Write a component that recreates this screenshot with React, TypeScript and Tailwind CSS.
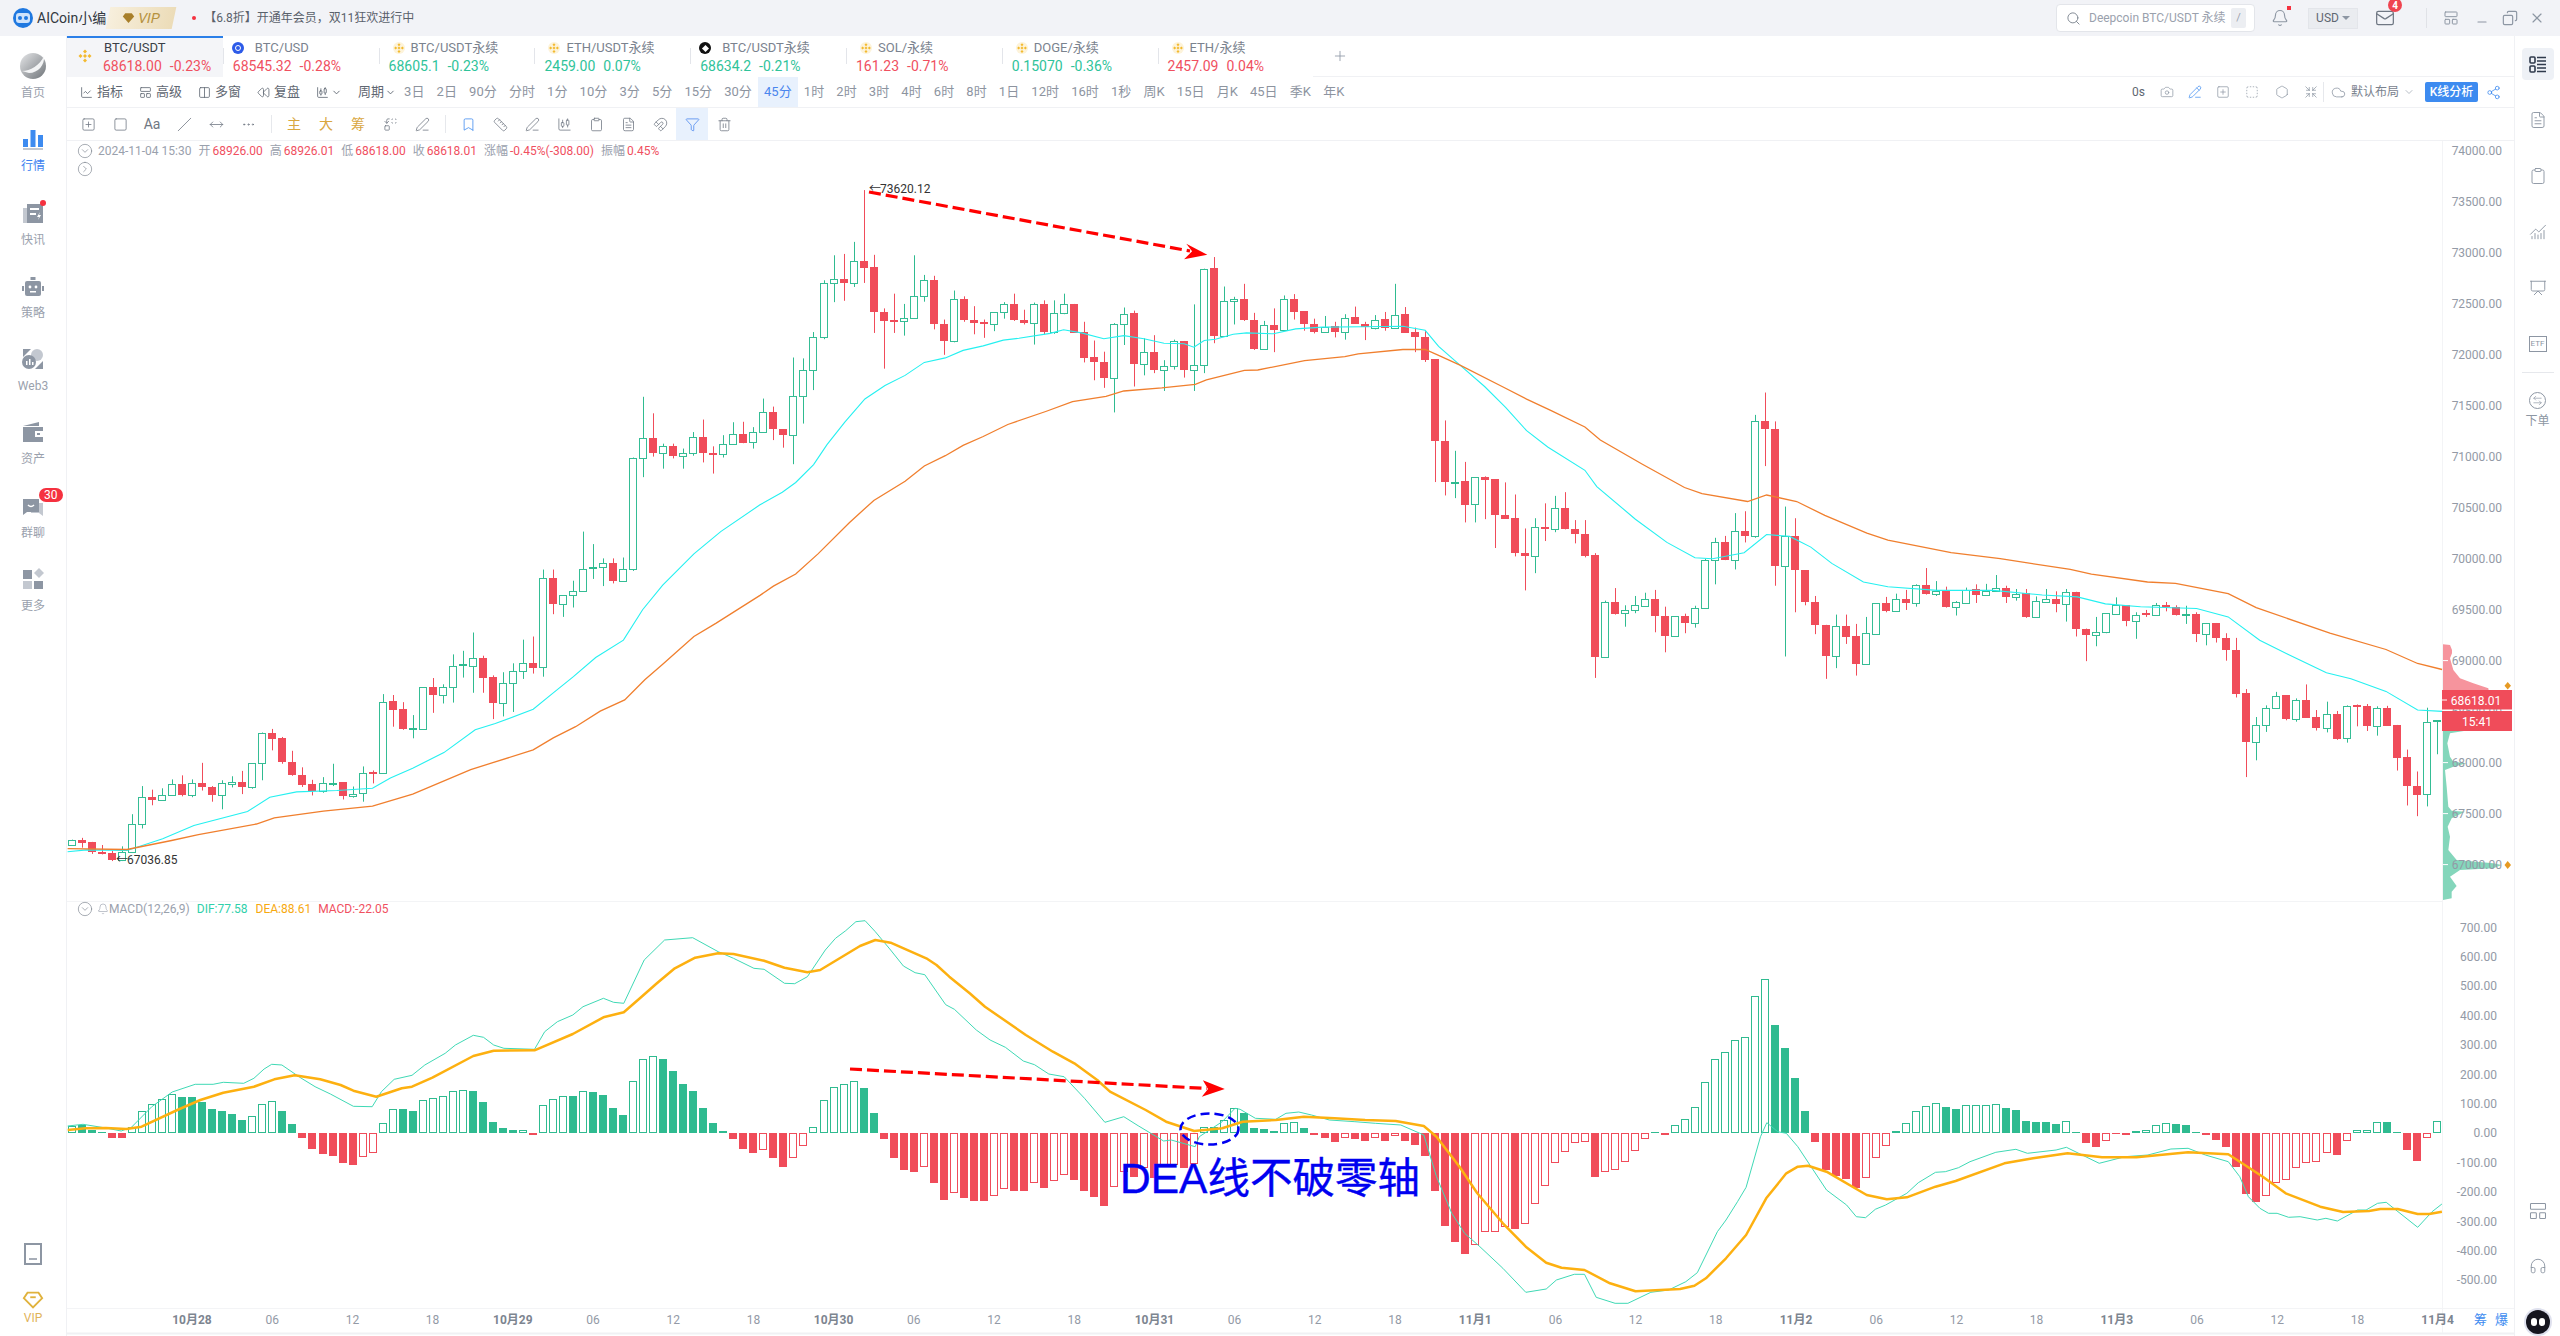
import type { ReactNode } from "react";
import {
  Search,
  Camera,
  PencilLine,
  Share2,
  ChevronDown,
  Plus,
  X,
  Minus,
  Bell,
  Mail,
  Cloud,
  Trash2,
  Funnel,
  Magnet,
  Square,
  Slash,
  MoveHorizontal,
  Ellipsis,
  Bookmark,
  Ruler,
  PenLine,
  ChartCandlestick,
  Copy,
  FileText,
  Headphones,
  ChartLine,
  LayoutPanelTop,
  Hexagon,
  Columns2,
  Rewind,
  SquarePlus,
  SquareDashed,
  Shrink,
  ArrowLeftRight,
  ChartNoAxesCombined,
  Presentation,
  CircleChevronDown,
  Clipboard,
  Replace,
} from "lucide-react";

// candles read off the chart: top,bottom,high,low,kind (r red, h hollow green, d small solid green)
const candlesA = `1500,1513,1500,1513,h 1500,1507,1496,1518,r 1505,1527,1505,1532,r 1527,1531,1512,1533,r 1530,1545,1525,1548,r 1528,1545,1515,1548,h 1465,1528,1443,1530,h 1405,1464,1380,1475,h 1404,1412,1388,1423,r 1399,1412,1385,1412,h 1376,1399,1365,1399,h 1376,1401,1356,1403,r 1374,1401,1365,1405,h 1373,1383,1328,1390,r 1383,1399,1380,1415,r 1374,1399,1367,1432,h 1371,1376,1358,1383,h 1370,1383,1346,1398,r 1329,1383,1329,1386,h 1260,1329,1260,1367,h 1260,1274,1252,1300,r 1272,1325,1270,1330,r 1325,1356,1301,1357,r 1356,1378,1338,1382,r 1375,1392,1366,1401,r 1374,1390,1360,1395,h 1373,1375,1330,1380,d 1372,1403,1372,1410,r 1397,1403,1381,1406,h 1350,1396,1336,1415,h 1348,1352,1345,1374,r 1191,1351,1174,1352,h 1190,1209,1176,1247,r 1207,1253,1192,1254,r 1251,1253,1221,1273,d 1159,1253,1159,1253,h 1159,1177,1138,1216,r 1157,1176,1152,1195,h 1110,1157,1085,1193,h 1107,1110,1077,1137,d 1092,1110,1036,1171,h 1092,1137,1088,1171,r 1136,1193,1132,1230,r 1148,1193,1125,1224,h 1123,1148,1105,1214,h 1105,1123,1052,1140,h 1105,1115,1045,1128,r 915,1114,895,1135,h 915,973,895,995,r 953,973,953,1001,h 944,953,920,980,h 893,944,810,944,h 889,892,838,916,d 881,890,870,932,h 881,920,870,926,r 893,920,868,920,h 644,893,644,898,h 601,644,508,688,h 601,633,545,642,r 619,633,613,669,h 619,640,613,646,r 635,640,624,669,h 597,635,587,640,h 597,635,559,655,r 634,637,619,680,r 613,637,594,644,h 592,613,565,615,h 592,611,564,612,r 586,610,576,624,h`;
const candlesB = `541,586,512,589,h 541,581,530,605,r 581,593,581,622,r 507,593,420,659,h 447,507,422,568,h 373,447,363,493,h 254,373,247,379,h 245,254,191,296,h 245,252,188,293,r 203,252,161,262,h 203,219,45,253,r 217,317,190,365,r 317,339,310,445,r 337,339,277,365,r 331,339,300,371,h 283,331,191,333,h 247,283,235,295,h 247,344,237,357,r 344,384,335,414,r 290,384,270,386,h 290,337,283,340,r 336,343,305,368,r 340,344,335,376,r 319,344,319,361,h 301,319,296,333,h 301,337,277,338,r 336,343,313,346,r 301,342,297,391,h 300,363,292,368,r 321,363,292,367,h 301,321,277,323,h 300,364,300,365,r 363,420,340,431,r 419,429,382,471,r 429,467,407,488,r 346,467,343,543,h 322,346,308,392,h 320,435,315,485,r 408,434,377,460,h 408,447,370,455,r 440,447,426,495,h 384,440,380,447,h 383,447,383,465,r 436,447,301,495,h 221,436,221,455,h 220,372,195,388,r 294,372,261,372,h 288,294,284,346,h 288,337,255,338,r 336,402,320,403,r 348,402,338,403,h 348,358,310,408,r 290,358,281,358,h 290,318,278,335,r 316,345,316,360,r 344,363,333,366,r 351,362,327,363,h 350,362,340,375,r 331,362,323,380,h 330,344,306,345,r 344,352,340,381,r 335,354,325,357,h 334,354,318,360,r 324,354,255,356,h 323,364,307,365,r 363,375,353,408,r 375,425,361,430,r 424,608,424,699,r 607,700,561,729,r 698,700,629,735,d`;
const candlesC = `669,719,627,757,r 660,718,660,757,h 660,665,658,750,r 664,740,664,812,r 740,749,671,749,r 747,822,697,830,r 822,830,770,903,r 766,830,748,866,h 766,772,716,797,r 727,772,700,778,h 726,772,692,772,r 772,781,752,802,r 781,829,752,832,r 827,1047,823,1091,r 929,1046,925,1046,h 929,953,898,955,r 946,952,935,981,h 935,946,915,952,h 922,936,908,938,h 921,959,902,993,r 958,1000,938,1036,r 959,1000,959,1003,h 958,974,953,995,r 940,974,936,983,h 838,940,835,942,h 798,838,790,890,h 798,837,786,838,r 776,837,737,858,h 775,787,733,800,r 540,787,526,790,h 540,557,478,636,r 556,850,540,893,r 787,850,723,1045,h 787,860,748,950,r 860,927,860,935,r 927,978,915,997,r 977,1043,977,1093,r 980,1043,955,1070,h 979,1003,955,1018,r 1001,1062,975,1086,r 995,1062,960,1062,h 931,996,931,998,h 931,947,917,950,r 922,947,910,949,h 921,930,902,945,r 892,930,890,938,h 892,910,855,912,r 905,910,883,915,h 905,938,895,940,r 929,938,926,957,h 902,930,897,932,h 901,912,890,930,r 904,912,889,915,h 897,905,870,905,h 897,918,893,930,r 910,918,900,925,h 909,961,900,962,r 926,961,916,962,h 921,927,900,930,h 921,932,905,950,r 907,932,900,970,h 906,987,906,1002,r 986,998,985,1055,r 993,998,960,1023,h 952,993,952,995,h 935,953,918,954,h 935,968,935,980,r 955,968,950,1007,h 952,956,945,960,r 935,955,930,957,h 934,938,928,948,r 938,955,935,957,r 953,956,936,975,d 953,997,950,1014,r 974,996,973,1021,h 973,1006,973,1015,r 1005,1031,995,1054,r 1030,1125,1005,1133,r 1123,1228,1115,1304,r 1193,1228,1175,1268,h 1155,1193,1150,1207,h 1129,1155,1121,1157,h 1128,1180,1128,1182,r 1139,1180,1135,1185,h 1138,1177,1105,1177,r 1176,1198,1160,1204,r 1169,1198,1142,1208,h 1168,1222,1162,1224,r 1151,1220,1150,1230,h 1150,1153,1148,1195,r 1151,1195,1147,1205,r 1156,1195,1152,1215,h 1155,1194,1151,1194,r 1192,1262,1192,1290,r 1261,1324,1245,1365,r 1323,1342,1292,1388,r 1185,1341,1155,1367,h 1182,1185,1182,1255,d`;

// macd bars: zoom y + s solid green, h hollow green, r solid red, e hollow red
const macdA = `708h 704s 720s 726s 743r 743r 712h 664h 643h 628h 613h 621s 621s 636s 657s 663s 672s 690s 679h 643h 634h 663s 702s 743r 776r 791r 797r 818r 824r 802e 790e 700h 658h 658s 663s 631h 625h 619h 604h 601h 603s 636s 696s 714s 720s 721h 735r 646h 628h 619h 618s 604h 606s 615s 654s 675s 574h 508h 499h 507s 543s 582s 603s 654s 699s 723s 747r 776r 788r 781e 803r 830r 805e 767e 712h 631h 592h 583h 574h 594s 669s 747r 803r 840r 845r 832e 878r 929r 910e 923r 932r 932r 919e 898e 903r 902r 880e 893r 874e 854e 869r 902r 920r 947r 892e 845e 860r 835e 865r 825e 825e 833r 823e 710h 710s 690h 655h 669s 714s 717s 724s 700h 697h 715s 734r 743r 755r 745e 747r 752r 745e 752r 738e 752r 764r 797r 902r 1007r 1055r 1091r 1064e 1027e 1025e 1010e 1016r 1003e 943e 889e 820e 787e 760e 757e 860r 847e 841e 817e 784e 746e 725s 735r 706h 688h 652h 577h 508h 487h 451h 442h 319h 268h 405s 474s 564s 663s 755r 840r 858r 866r 893r 865e 805e 767e 723s 700h 664h 649h 640h 651s 657s 646h 646h 646h 643h 654s 660s 693s 696s 696s 702s 694h 726s 759r 770r 754e 732r 735r 723s 720h 706h 700h 702s 705s 726s 735r 750r 770r 830r 911r 935r 917e 880e 871e 835e 820e 817e 790e 794r 752e 720h 720h 697h 696s 726s 779r 812r 743e 694h`;

type Pt = [number, number];

const line = (groups: [Pt[], number, number, number, number][]) =>
  groups
    .flatMap(([pts, x0, sx, y0, sy]) => pts.map(([x, y]) => `${(x0 + x / sx).toFixed(1)},${(y0 + y / sy).toFixed(1)}`))
    .join(" ");

const maFast = line([
  [[[17,1527],[60,1523],[150,1524],[230,1498],[300,1468],[420,1437],[470,1405],[530,1393],[620,1390],[700,1385],[740,1362],[790,1340],[860,1305],[930,1254],[975,1240],[1060,1208],[1100,1175],[1150,1135],[1200,1092],[1262,1053],[1305,985],[1350,930],[1420,860],[1480,810],[1568,750]], 60, 2.24, 170, 2.24],
  [[[50,722],[80,700],[120,660],[150,615],[190,565],[235,513],[280,483],[325,460],[368,431],[415,421],[455,404],[500,394],[545,381],[580,377],[650,366],[680,358],[720,365],[770,378],[815,371],[860,378],[905,388],[950,389],[972,397],[995,382],[1020,379],[1060,368],[1090,365],[1150,367],[1200,356],[1260,352],[1350,351],[1440,350],[1490,359],[1520,395],[1568,437]], 760, 2.24, 170, 2.24],
  [[[35,465],[65,510],[95,560],[125,595],[178,645],[195,680],[250,750],[295,800],[335,833],[360,835],[405,822],[437,783],[470,787],[500,810],[530,845],[575,885],[610,895],[680,903],[760,903],[830,913],[880,917],[920,932],[970,938],[1050,942],[1095,960],[1140,1010],[1180,1040],[1235,1080],[1270,1093],[1320,1120],[1365,1160],[1400,1163]], 1460, 1.4255, 170, 2.148],
]);

const maSlow = line([
  [[[17,1520],[150,1522],[250,1502],[310,1489],[440,1465],[480,1451],[590,1436],[700,1425],[790,1398],[920,1343],[1060,1299],[1105,1272],[1155,1247],[1210,1212],[1265,1187],[1310,1142],[1350,1107],[1420,1045],[1470,1015],[1568,953]], 60, 2.24, 170, 2.24],
  [[[30,932],[80,905],[130,860],[200,790],[255,740],[325,697],[368,663],[415,640],[455,617],[500,597],[555,570],[640,541],[700,519],[775,507],[815,495],[900,488],[975,480],[1000,470],[1085,449],[1115,448],[1220,427],[1310,418],[1340,412],[1440,402],[1490,402],[1520,415],[1568,437]], 760, 2.24, 170, 2.24],
  [[[60,465],[95,492],[130,517],[178,552],[200,580],[260,632],[320,682],[345,695],[410,712],[437,698],[480,712],[520,742],[580,780],[610,795],[700,822],[770,835],[870,858],[900,868],[980,885],[1020,888],[1095,910],[1135,940],[1240,995],[1320,1030],[1365,1060],[1400,1073]], 1460, 1.4255, 170, 2.148],
]);

const dif = line([
  [[[15,708],[45,703],[90,714],[120,723],[140,712],[180,650],[220,606],[265,583],[300,583],[320,577],[360,580],[380,565],[400,537],[415,523],[435,525],[470,562],[500,590],[530,612],[575,649],[612,650],[630,605],[655,568],[690,556],[715,525],[755,490],[775,465],[810,436],[830,442],[850,465],[870,475],[930,478],[950,425],[975,395],[1005,375],[1025,350],[1065,325],[1085,337],[1105,340],[1145,210],[1185,150],[1240,143],[1290,185],[1320,205],[1360,235],[1380,238],[1420,280],[1440,281],[1465,260],[1500,180],[1520,145],[1540,122],[1560,95]], 60, 1.96, 890, 3],
  [[[10,92],[30,125],[60,180],[85,228],[108,248],[127,254],[168,344],[185,358],[228,420],[255,450],[285,472],[320,513],[342,524],[370,552],[400,560],[440,625],[480,697],[517,680],[545,707],[570,730],[595,753],[610,750],[657,770],[665,740],[685,720],[710,695],[735,655],[745,658],[775,685],[815,688],[835,670],[860,666],[885,675],[920,690],[970,695],[1010,700],[1060,705],[1105,735],[1130,860],[1160,970],[1185,1030],[1215,1070],[1260,1135],[1305,1207],[1345,1197],[1365,1170],[1400,1153],[1420,1153],[1443,1222],[1480,1240],[1505,1240],[1550,1207]], 860, 1.96, 890, 3],
  [[[15,1200],[45,1175],[65,1148],[100,1025],[115,990],[135,935],[150,892],[175,740],[186,698],[205,725],[220,730],[240,770],[290,900],[325,945],[342,980],[358,983],[375,958],[393,945],[430,910],[450,878],[480,847],[497,845],[520,833],[540,815],[585,787],[620,778],[640,790],[690,780],[708,772],[765,820],[810,800],[850,795],[890,777],[920,775],[950,795],[990,815],[1010,860],[1025,920],[1045,955],[1060,970],[1075,970],[1095,982],[1115,980],[1145,990],[1160,985],[1180,993],[1215,960],[1230,960],[1250,940],[1265,937],[1320,1012],[1345,965],[1362,942]], 1660, 1.742, 890, 3],
]);

const dea = line([
  [[[15,720],[50,715],[90,714],[130,717],[160,710],[230,660],[275,630],[320,608],[380,590],[420,568],[460,556],[510,568],[550,585],[575,602],[620,620],[670,595],[690,590],[730,563],[810,498],[850,482],[930,481],[1005,432],[1065,382],[1105,367],[1140,320],[1170,280],[1205,235],[1245,203],[1290,190],[1320,192],[1380,212],[1420,233],[1465,247],[1490,240],[1568,168]], 60, 1.96, 890, 3],
  [[[30,150],[60,158],[130,205],[150,225],[175,260],[215,310],[245,350],[325,435],[378,485],[420,520],[465,570],[490,605],[560,660],[600,695],[655,723],[710,715],[750,695],[815,690],[870,680],[930,685],[990,690],[1050,693],[1105,708],[1130,740],[1175,830],[1210,910],[1260,1000],[1305,1070],[1345,1118],[1375,1133],[1420,1140],[1470,1180],[1520,1204]], 860, 1.96, 890, 3],
  [[[35,1197],[60,1187],[80,1165],[115,1105],[150,1035],[185,925],[220,850],[240,830],[258,827],[290,845],[360,915],[395,928],[430,922],[480,890],[515,873],[600,820],[650,805],[710,790],[770,802],[830,802],[920,787],[990,793],[1050,860],[1090,910],[1150,950],[1190,966],[1235,963],[1255,957],[1285,957],[1320,972],[1340,972],[1362,965]], 1660, 1.742, 890, 3],
]);

const GREEN = "#2fbb90";
const RED = "#f04c5a";
const barX = (i: number) => Math.round(72 + 10.02 * i);

const parseCandles = (src: string, sy: number) =>
  src.split(" ").map((c) => {
    const p = c.split(",");
    const [top, bottom, high, low] = p.slice(0, 4).map((v) => 170 + Number(v) / sy);
    return { top, bottom, high, low, kind: p[4] };
  });

const candles = [...parseCandles(candlesA, 2.24), ...parseCandles(candlesB, 2.24), ...parseCandles(candlesC, 2.148)];

const bars = macdA.split(" ").map((b) => ({
  y: 890 + Number(b.slice(0, -1)) / 3,
  kind: b.slice(-1),
}));

const ZERO = 1133;

const profile = (pts: Pt[]) => pts.map(([x, y]) => `${2400 + x / 3},${620 + y / 3}`).join(" ");

const priceTicks = Array.from({ length: 15 }, (_, i) => ({ label: (74000 - i * 500).toFixed(2), y: 150.6 + i * 51 }));
const macdTicks = Array.from({ length: 13 }, (_, i) => ({ label: (700 - i * 100).toFixed(2), y: 927 + i * 29.4 }));
const dayNames = ["10月28", "10月29", "10月30", "10月31", "11月1", "11月2", "11月3", "11月4"];
const timeTicks = Array.from({ length: 29 }, (_, i) => ({
  x: 192 + i * 80.2,
  label: i % 4 === 0 ? dayNames[i / 4] : ["", "06", "12", "18"][i % 4],
  bold: i % 4 === 0,
}));

function Chart() {
  return (
    <svg viewBox="67 141 2447 1195" className="block h-full w-full">
      <line x1="67" y1="901.5" x2="2442" y2="901.5" stroke="#f3f4f6" />
      <line x1="67" y1="1308.5" x2="2514" y2="1308.5" stroke="#f3f4f6" />
      <line x1="67" y1="1333.5" x2="2514" y2="1333.5" stroke="#f0f1f4" strokeWidth="2" />
      <line x1="2442.5" y1="141" x2="2442.5" y2="1333" stroke="#f3f4f6" />

      {/* volume profile */}
      <polygon
        fill="#f6949d"
        points={profile([[129,73],[150,75],[156,90],[156,100],[150,115],[160,150],[180,175],[220,190],[265,205],[270,240],[129,240]])}
      />
      <polygon
        fill="#84d6bb"
        points={profile([[129,300],[210,330],[150,340],[142,370],[150,410],[160,425],[200,430],[160,440],[135,450],[140,500],[145,560],[155,572],[195,575],[155,595],[143,620],[150,650],[145,690],[170,720],[280,730],[305,735],[280,745],[180,750],[150,770],[170,798],[155,815],[155,835],[129,840]])}
      />

      {/* candles */}
      {candles.map((c, i) => {
        const x = barX(i);
        const color = c.kind === "r" ? RED : GREEN;
        const top = Math.round(c.top);
        const bottom = Math.round(c.bottom);
        return (
          <g key={i}>
            <line x1={x + 0.5} y1={c.high} x2={x + 0.5} y2={c.low} stroke={color} strokeWidth="1" />
            {c.kind === "h" ? (
              <rect x={x - 3.5} y={top + 0.5} width="7" height={Math.max(bottom - top, 1)} fill="#fff" stroke="#35bd95" />
            ) : (
              <rect x={x - 4} y={top} width="8" height={Math.max(bottom - top, 2)} fill={color} />
            )}
          </g>
        );
      })}
      <polyline points={maFast} fill="none" stroke="#25f0f0" strokeWidth="1.1" />
      <polyline points={maSlow} fill="none" stroke="#f07f2e" strokeWidth="1.3" />

      <text x="869" y="193" fontSize="12" fill="#333">←</text>
      <text x="880" y="193" fontSize="12" fill="#333">73620.12</text>
      <text x="116" y="864" fontSize="12" fill="#333">←</text>
      <text x="127" y="864" fontSize="12" fill="#333">67036.85</text>

      {/* macd */}
      {bars.map((b, i) => {
        const x = barX(i);
        const v = Math.round(b.y);
        const y = Math.min(v, ZERO);
        const h = Math.abs(ZERO - v);
        if (b.kind === "s" || b.kind === "r")
          return <rect key={i} x={x - 4} y={y} width="8" height={h} fill={b.kind === "s" ? GREEN : RED} />;
        return (
          <rect key={i} x={x - 3.5} y={y + 0.5} width="7" height={h - 1} fill="#fff" stroke={b.kind === "h" ? GREEN : RED} />
        );
      })}
      <polyline points={dif} fill="none" stroke="#3fd9b5" strokeWidth="1" />
      <polyline points={dea} fill="none" stroke="#fdb010" strokeWidth="2.5" strokeLinejoin="round" />

      {/* annotations drawn on the chart */}
      <line x1="869" y1="192" x2="1190" y2="251" stroke="#ff0000" strokeWidth="3.2" strokeDasharray="12 5" />
      <polygon points="1207.3,254.8 1186.3,243.7 1192.1,251.3 1184.1,259.3" fill="#ff0000" />
      <line x1="850" y1="1069" x2="1207" y2="1088.5" stroke="#ff0000" strokeWidth="3.2" strokeDasharray="12 5" />
      <polygon points="1224.8,1089 1202.9,1080.3 1208,1089 1201.8,1096.7" fill="#ff0000" />
      <ellipse cx="1209.5" cy="1129" rx="29" ry="15.5" fill="none" stroke="#0000f0" strokeWidth="2.5" strokeDasharray="9 5" />

      {/* axes */}
      {priceTicks.map((t) => (
        <g key={t.label}>
          <line x1="2443" y1={t.y} x2="2448" y2={t.y} stroke="#fff" />
          <text x="2502" y={t.y + 4.5} fontSize="12" textAnchor="end" fill="#939aa6">{t.label}</text>
        </g>
      ))}
      {macdTicks.map((t) => (
        <text key={t.label} x="2497" y={t.y + 4.5} fontSize="12" textAnchor="end" fill="#939aa6">{t.label}</text>
      ))}
      {timeTicks.map((t) => (
        <text
          key={t.x}
          x={t.x}
          y="1323.5"
          fontSize="12"
          textAnchor="middle"
          fontWeight={t.bold ? 700 : 400}
          fill={t.bold ? "#7d8590" : "#939aa6"}
        >
          {t.label}
        </text>
      ))}
      <text x="2474" y="1324" fontSize="13" fill="#3d8bf0">筹</text>
      <text x="2495" y="1324" fontSize="13" fill="#3d8bf0">爆</text>

      {/* live price */}
      <rect x="2442" y="690" width="70" height="19.5" fill={RED} />
      <rect x="2442" y="711" width="70" height="20" fill={RED} />
      <line x1="2442" y1="700" x2="2447" y2="700" stroke="#fff" />
      <text x="2476" y="704.5" fontSize="12" textAnchor="middle" fill="#fff">68618.01</text>
      <text x="2477" y="725.5" fontSize="12" textAnchor="middle" fill="#fff">15:41</text>
      <polygon points="2507.7,682 2511,685.7 2507.7,689.5 2504.5,685.7" fill="#e69a23" />
      <polygon points="2507.7,861 2511,865 2507.7,869 2504.5,865" fill="#e69a23" />
    </svg>
  );
}

function NavIcon({ children }: { children: ReactNode }) {
  return (
    <svg viewBox="0 0 24 24" className="h-[24px] w-[24px]">
      {children}
    </svg>
  );
}

const navItems: { label: string; active?: boolean; badge?: string; dot?: boolean; icon: ReactNode }[] = [
  {
    label: "首页",
    icon: (
      <svg viewBox="0 0 30 30" className="h-[30px] w-[30px]">
        <defs>
          <linearGradient id="homeBall" x1="0" y1="0" x2="1" y2="1">
            <stop offset="0" stopColor="#e5e6e8" />
            <stop offset="1" stopColor="#6f7479" />
          </linearGradient>
        </defs>
        <circle cx="15" cy="15" r="13" fill="url(#homeBall)" />
        <path d="M4 20C12 20 22 14 26 5c1 9-6 17-15 17z" fill="#f3f4f5" />
      </svg>
    ),
  },
  {
    label: "行情",
    active: true,
    icon: (
      <NavIcon>
        <rect x="2" y="12" width="5" height="8" fill="#3d8bf0" />
        <rect x="9.5" y="3" width="5" height="17" fill="#3d8bf0" />
        <rect x="17" y="8" width="5" height="12" fill="#3d8bf0" />
        <rect x="2" y="21" width="20" height="2" fill="#c3c8d0" />
      </NavIcon>
    ),
  },
  {
    label: "快讯",
    dot: true,
    icon: (
      <NavIcon>
        <rect x="2" y="7" width="6" height="15" fill="#c3c8d0" />
        <rect x="6" y="3" width="16" height="19" fill="#8d96a3" />
        <rect x="9" y="7" width="9" height="2" fill="#fff" />
        <rect x="9" y="12" width="6" height="2" fill="#fff" />
        <path d="M19 11l-3 5h2l-1 3 3-5h-2z" fill="#fff" />
      </NavIcon>
    ),
  },
  {
    label: "策略",
    icon: (
      <NavIcon>
        <rect x="4" y="7" width="16" height="15" rx="2" fill="#8d96a3" />
        <rect x="9.5" y="3" width="5" height="3" fill="#8d96a3" />
        <rect x="1" y="12" width="2" height="5" fill="#8d96a3" />
        <rect x="21" y="12" width="2" height="5" fill="#8d96a3" />
        <circle cx="9" cy="13" r="1.4" fill="#fff" />
        <circle cx="15" cy="13" r="1.4" fill="#fff" />
        <rect x="9" y="17" width="6" height="1.5" fill="#fff" />
      </NavIcon>
    ),
  },
  {
    label: "Web3",
    icon: (
      <NavIcon>
        <path d="M2 2h8L2 10z" fill="#8d96a3" />
        <path d="M22 22h-8l8-8z" fill="#8d96a3" />
        <circle cx="16" cy="8" r="6" fill="#c3c8d0" />
        <circle cx="8" cy="15" r="7" fill="#8d96a3" />
        <rect x="5" y="14" width="1.5" height="4" fill="#fff" />
        <rect x="8" y="12" width="1.5" height="6" fill="#fff" />
        <rect x="11" y="15" width="1.5" height="3" fill="#fff" />
      </NavIcon>
    ),
  },
  {
    label: "资产",
    icon: (
      <NavIcon>
        <path d="M2 6l16-4v4z" fill="#8d96a3" />
        <rect x="2" y="7" width="20" height="15" fill="#8d96a3" />
        <rect x="14" y="11" width="8" height="6" fill="#fff" />
        <rect x="16" y="13" width="3" height="2" fill="#8d96a3" />
      </NavIcon>
    ),
  },
  {
    label: "群聊",
    badge: "30",
    icon: (
      <NavIcon>
        <path d="M2 5h16v13H6l-4 3z" fill="#8d96a3" />
        <path d="M18 9h4v13l-4-3h-8v-1h8z" fill="#c3c8d0" />
        <path d="M7 11c2 2 4 2 6 0" stroke="#fff" strokeWidth="1.5" fill="none" />
      </NavIcon>
    ),
  },
  {
    label: "更多",
    icon: (
      <NavIcon>
        <rect x="2" y="3" width="9" height="9" fill="#8d96a3" />
        <path d="M18 1l5 5-5 5-5-5z" fill="#c3c8d0" />
        <rect x="2" y="14" width="9" height="8" fill="#c3c8d0" />
        <rect x="13" y="14" width="9" height="8" fill="#8d96a3" />
      </NavIcon>
    ),
  },
];

function LeftNav() {
  return (
    <div className="flex w-[66px] shrink-0 flex-col items-center pt-[11px]">
      {navItems.map((item) => (
        <div key={item.label} className="relative flex h-[73.3px] w-full flex-col items-center last:mt-[5px]">
          <div className="flex h-[38px] items-center">{item.icon}</div>
          <span className={`text-[12px] leading-[16px] ${item.active ? "text-[#3d7ff0]" : "text-[#9aa1ad]"}`}>
            {item.label}
          </span>
          {item.dot && <span className="absolute left-[40px] top-[6px] h-[6px] w-[6px] rounded-full bg-[#f5313f]" />}
          {item.badge && (
            <span className="absolute left-[39px] top-[1px] rounded-full bg-[#f5313f] px-[5px] text-[12px] leading-[14px] text-white">
              {item.badge}
            </span>
          )}
        </div>
      ))}
      <div className="mt-auto flex flex-col items-center pb-[10px]">
        <svg viewBox="0 0 18 22" className="mb-[25px] h-[22px] w-[18px]">
          <rect x="1" y="1" width="16" height="20" fill="none" stroke="#8d96a3" strokeWidth="2" />
          <rect x="5" y="15" width="8" height="2" fill="#a8aeb8" />
        </svg>
        <svg viewBox="0 0 24 20" className="h-[20px] w-[22px]">
          <path d="M6 2h12l4 6-10 10L2 8z" fill="none" stroke="#e0b23c" strokeWidth="2" />
          <rect x="9" y="6" width="6" height="2" fill="#e0b23c" />
        </svg>
        <span className="text-[12px] leading-[16px] text-[#dfb35a]">VIP</span>
      </div>
    </div>
  );
}

function BnbIcon({ big }: { big?: boolean }) {
  return (
    <svg viewBox="0 0 16 16" className={big ? "h-[16px] w-[16px]" : "h-[12px] w-[12px]"}>
      {!big && <circle cx="8" cy="8" r="8" fill="#fdf3da" />}
      <g fill="#f3ba2f">
        <path d="M8 1.5L10 3.5 8 5.5 6 3.5z" />
        <path d="M3.5 6L5.5 8 3.5 10 1.5 8z" />
        <path d="M12.5 6L14.5 8 12.5 10 10.5 8z" />
        <path d="M8 6L10 8 8 10 6 8z" />
        <path d="M8 10.5L10 12.5 8 14.5 6 12.5z" />
      </g>
    </svg>
  );
}

const tabs = [
  { name: "BTC/USDT", price: "68618.00", change: "-0.23%", up: false, coin: "big" },
  { name: "BTC/USD", price: "68545.32", change: "-0.28%", up: false, coin: "blue" },
  { name: "BTC/USDT永续", price: "68605.1", change: "-0.23%", up: true, coin: "bnb" },
  { name: "ETH/USDT永续", price: "2459.00", change: "0.07%", up: true, coin: "bnb" },
  { name: "BTC/USDT永续", price: "68634.2", change: "-0.21%", up: true, coin: "black" },
  { name: "SOL/永续", price: "161.23", change: "-0.71%", up: false, coin: "bnb" },
  { name: "DOGE/永续", price: "0.15070", change: "-0.36%", up: true, coin: "bnb" },
  { name: "ETH/永续", price: "2457.09", change: "0.04%", up: false, coin: "bnb" },
];

function Tabs() {
  return (
    <div className="flex h-[41px] shrink-0">
      {tabs.map((t, i) => (
        <div
          key={i}
          className={`relative h-full w-[155.8px] shrink-0 ${i === 0 ? "border-t-2 border-[#2b7fe8] bg-[#f4f5f8]" : "border-b-2 border-transparent"}`}
        >
          {i > 0 && <span className="absolute left-0 top-[12px] h-[16px] w-px bg-[#e3e5ea]" />}
          {t.coin === "big" && (
            <span className="absolute left-[10px] top-[10px]">
              <BnbIcon big />
            </span>
          )}
          {t.coin === "bnb" && (
            <span className="absolute left-[14px] top-[6px]">
              <BnbIcon />
            </span>
          )}
          {t.coin === "blue" && (
            <span className="absolute left-[9px] top-[6px] flex h-[12px] w-[12px] items-center justify-center rounded-full bg-[#2d5be8]">
              <span className="h-[6px] w-[6px] rounded-full border-[1.5px] border-white" />
            </span>
          )}
          {t.coin === "black" && (
            <span className="absolute left-[9px] top-[6px] flex h-[12px] w-[12px] items-center justify-center rounded-full bg-[#111]">
              <span className="h-[5px] w-[5px] rotate-45 bg-white" />
            </span>
          )}
          <div
            className={`absolute whitespace-nowrap text-[13px] leading-[18px] ${i === 0 ? "left-[37px] top-[1px] text-[#3a3f47]" : "left-[32px] top-[3px] text-[#7a828e]"}`}
          >
            {t.name}
          </div>
          <div
            className={`absolute flex gap-[8px] whitespace-nowrap text-[14px] leading-[18px] ${i === 0 ? "left-[36px] top-[19px]" : "left-[10px] top-[21px]"} ${t.up ? "text-[#2fc39a]" : "text-[#f0505f]"}`}
          >
            <span>{t.price}</span>
            <span>{t.change}</span>
          </div>
        </div>
      ))}
      <div className="flex flex-1 items-center border-b border-[#f0f1f4] pl-[19px]">
        <Plus className="h-[16px] w-[16px] text-[#8d96a3]" strokeWidth={1.25} />
      </div>
    </div>
  );
}

const periods = ["3日", "2日", "90分", "分时", "1分", "10分", "3分", "5分", "15分", "30分", "45分", "1时", "2时", "3时", "4时", "6时", "8时", "1日", "12时", "16时", "1秒", "周K", "15日", "月K", "45日", "季K", "年K"];

function ToolLabel({ icon, label }: { icon: ReactNode; label: string }) {
  return (
    <div className="flex items-center gap-[4px] text-[13px] text-[#5f6772]">
      {icon}
      <span>{label}</span>
    </div>
  );
}

function PeriodBar() {
  const ic = "h-[13px] w-[13px] text-[#5f6772]";
  return (
    <div className="flex h-[31px] shrink-0 items-center border-b border-[#f0f1f4] pl-[13px] pr-[13px]">
      <div className="flex items-center gap-[16px]">
        <ToolLabel icon={<ChartLine className={ic} strokeWidth={1.5} />} label="指标" />
        <ToolLabel icon={<LayoutPanelTop className={ic} strokeWidth={1.5} />} label="高级" />
        <ToolLabel icon={<Columns2 className={ic} strokeWidth={1.5} />} label="多窗" />
        <ToolLabel icon={<Rewind className={ic} strokeWidth={1.5} />} label="复盘" />
        <div className="flex items-center gap-[2px]">
          <ChartCandlestick className={ic} strokeWidth={1.5} />
          <ChevronDown className="h-[11px] w-[11px] text-[#5f6772]" />
        </div>
        <div className="flex items-center gap-[1px] text-[13px] text-[#5f6772]">
          周期
          <ChevronDown className="h-[11px] w-[11px]" />
        </div>
      </div>
      <div className="ml-[8px] flex items-center gap-[12.2px] text-[13px] text-[#8d949f]">
        {periods.map((p) =>
          p === "45分" ? (
            <span key={p} className="-mx-[6px] flex h-[30px] items-center bg-[#e8f1fd] px-[6px] text-[#4a86ee]">
              {p}
            </span>
          ) : (
            <span key={p}>{p}</span>
          ),
        )}
      </div>
      <div className="ml-auto flex items-center text-[#8d96a3]">
        <span className="mr-[15px] text-[12px] text-[#5f6772]">0s</span>
        <Camera className="mr-[14px] h-[14px] w-[14px]" strokeWidth={1.25} />
        <PencilLine className="mr-[14px] h-[14px] w-[14px] text-[#3d8bf0]" strokeWidth={1.25} />
        <SquarePlus className="mr-[15px] h-[14px] w-[14px]" strokeWidth={1.25} />
        <SquareDashed className="mr-[16px] h-[14px] w-[14px]" strokeWidth={1.25} />
        <Hexagon className="mr-[15px] h-[14px] w-[14px]" strokeWidth={1.25} />
        <Shrink className="mr-[5px] h-[14px] w-[14px]" strokeWidth={1.25} />
        <span className="mr-[7px] h-[20px] w-px bg-[#e6e8ec]" />
        <Cloud className="mr-[5px] h-[15px] w-[15px]" strokeWidth={1.25} />
        <span className="text-[12px] text-[#7a828e]">默认布局</span>
        <ChevronDown className="ml-[4px] mr-[10px] h-[12px] w-[12px]" strokeWidth={1.25} />
        <span className="mr-[8px] flex h-[20px] w-[53px] items-center justify-center rounded-[2px] bg-[#3d8bf0] text-[12px] font-medium text-white">
          K线分析
        </span>
        <Share2 className="h-[15px] w-[15px] text-[#3d8bf0]" strokeWidth={1.25} />
      </div>
    </div>
  );
}

function DrawBar() {
  const ic = "h-[15px] w-[15px]";
  const draw: ReactNode[] = [
    <SquarePlus className={ic} strokeWidth={1.25} />,
    <Square className={ic} strokeWidth={1.25} />,
    <span className="text-[14px] leading-none">Aa</span>,
    <Slash className={ic} strokeWidth={1.25} />,
    <MoveHorizontal className={ic} strokeWidth={1.25} />,
    <Ellipsis className={ic} strokeWidth={1.25} />,
  ];
  const gold = ["主", "大", "筹"];
  const mid: ReactNode[] = [
    <Replace className={ic} strokeWidth={1.25} />,
    <PenLine className={ic} strokeWidth={1.25} />,
  ];
  const tools: ReactNode[] = [
    <Bookmark className={`${ic} text-[#3d8bf0]`} strokeWidth={1.25} />,
    <Ruler className={ic} strokeWidth={1.25} />,
    <PenLine className={ic} strokeWidth={1.25} />,
    <ChartCandlestick className={ic} strokeWidth={1.25} />,
    <Clipboard className={ic} strokeWidth={1.25} />,
    <FileText className={ic} strokeWidth={1.25} />,
    <Magnet className={ic} strokeWidth={1.25} />,
  ];
  const cell = "flex h-full w-[32px] items-center justify-center";
  return (
    <div className="flex h-[33px] shrink-0 items-center border-b border-[#f0f1f4] pl-[5px] text-[#6f7783]">
      {draw.map((n, i) => (
        <div key={i} className={cell}>{n}</div>
      ))}
      <span className="mx-[7px] h-[18px] w-px bg-[#e6e8ec]" />
      <div className="-ml-[1px] flex h-full items-center">
        {gold.map((g) => (
          <div key={g} className={`${cell} text-[14px] text-[#d9a73f]`}>{g}</div>
        ))}
        {mid.map((n, i) => (
          <div key={i} className={cell}>{n}</div>
        ))}
      </div>
      <span className="mx-[7px] h-[18px] w-px bg-[#e6e8ec]" />
      <div className="-ml-[1px] flex h-full items-center">
        {tools.map((n, i) => (
          <div key={i} className={cell}>{n}</div>
        ))}
        <div className={`${cell} bg-[#e8f1fd]`}>
          <Funnel className={`${ic} text-[#4a86ee]`} strokeWidth={1.25} />
        </div>
        <div className={cell}>
          <Trash2 className={ic} strokeWidth={1.25} />
        </div>
      </div>
    </div>
  );
}

function TopBar() {
  return (
    <div className="flex h-[36px] shrink-0 items-center bg-[#f2f3f7] pl-[13px] pr-[15px]">
      <span className="flex h-[20px] w-[20px] items-center justify-center rounded-full bg-[#1f78e0]">
        <span className="flex h-[10px] w-[14px] items-center justify-center gap-[2px] rounded-[3px] bg-[#cfe3fb]">
          <span className="h-[4px] w-[4px] rounded-full bg-[#1f78e0]" />
          <span className="h-[4px] w-[4px] rounded-full bg-[#1f78e0]" />
        </span>
      </span>
      <span className="ml-[4px] text-[14px] text-[#33383f]">AICoin小编</span>
      <span className="ml-[2px] flex h-[22px] w-[66px] -skew-x-12 items-center justify-center gap-[3px] bg-[linear-gradient(90deg,#f7efdd,#ecdcb8)] text-[14px] text-[#b6923f]">
        <svg viewBox="0 0 16 14" className="h-[12px] w-[13px] skew-x-12">
          <path d="M4 1h8l3 4-7 8-7-8z" fill="#a87f2a" />
        </svg>
        <span>VIP</span>
      </span>
      <span className="ml-[18px] h-[4px] w-[4px] rounded-full bg-[#f5313f]" />
      <span className="ml-[8px] text-[12px] text-[#5a616b]">【6.8折】开通年会员，双11狂欢进行中</span>

      <div className="ml-auto flex items-center">
        <div className="flex h-[28px] w-[199px] items-center rounded-[4px] border border-[#e3e5ea] bg-white pl-[9px] pr-[8px]">
          <Search className="h-[15px] w-[15px] text-[#7d8590]" strokeWidth={1.5} />
          <span className="ml-[8px] whitespace-nowrap text-[12px] text-[#9aa1ad]">Deepcoin BTC/USDT 永续</span>
          <span className="ml-auto flex h-[20px] w-[15px] items-center justify-center rounded-[2px] bg-[#eceef2] text-[11px] text-[#9aa1ad]">/</span>
        </div>
        <div className="relative ml-[16px]">
          <Bell className="h-[18px] w-[18px] text-[#8d96a3]" strokeWidth={1.5} />
          <span className="absolute right-[-2px] top-[-3px] h-[4px] w-[4px] bg-[#f5313f]" />
        </div>
        <div className="ml-[19px] flex h-[21px] w-[50px] items-center justify-center gap-[3px] border border-[#e3e5ea] bg-[#eaecf0] text-[12px] text-[#5f6772]">
          USD
          <svg viewBox="0 0 8 4" className="h-[4px] w-[8px]">
            <path d="M0 0h8L4 4z" fill="#8d96a3" />
          </svg>
        </div>
        <div className="relative ml-[17px]">
          <Mail className="h-[20px] w-[20px] text-[#6f7783]" strokeWidth={1.5} />
          <span className="absolute right-[-7px] top-[-10px] flex h-[14px] w-[14px] items-center justify-center rounded-full bg-[#ef4450] text-[10px] font-bold text-white">4</span>
        </div>
        <span className="ml-[31px] h-[20px] w-px bg-[#e0e2e7]" />
        <LayoutPanelTop className="ml-[16px] h-[16px] w-[16px] text-[#8d96a3]" strokeWidth={1.5} />
        <Minus className="ml-[16px] h-[14px] w-[14px] translate-y-[4px] text-[#8d96a3]" strokeWidth={1.75} />
        <Copy className="ml-[13px] h-[16px] w-[16px] -scale-x-100 text-[#8d96a3]" strokeWidth={1.75} />
        <X className="ml-[11px] h-[16px] w-[16px] text-[#8d96a3]" strokeWidth={1.75} />
      </div>
    </div>
  );
}

function RightNav() {
  const ic = "h-[18px] w-[18px] text-[#8d96a3]";
  const slot = "flex h-[56px] items-center justify-center";
  return (
    <div className="flex w-[46px] shrink-0 flex-col items-center border-l border-[#f0f1f4] pt-[12px]">
      <div className="flex h-[32px] w-[32px] items-center justify-center rounded-[4px] bg-[#eef1f6]">
        <svg viewBox="0 0 18 18" className="h-[18px] w-[18px]">
          <rect x="1" y="2" width="5" height="6" rx="1" fill="none" stroke="#2f3a4c" strokeWidth="1.6" />
          <rect x="1" y="11" width="5" height="6" rx="1" fill="none" stroke="#2f3a4c" strokeWidth="1.6" />
          <path d="M8 2.5h9M8 6h9M8 9.5h9M8 13h9M8 16.5h9" stroke="#2f3a4c" strokeWidth="1.4" />
        </svg>
      </div>
      <div className="mt-[12px]" />
      <div className={slot}><FileText className={ic} strokeWidth={1.25} /></div>
      <div className={slot}><Clipboard className={ic} strokeWidth={1.25} /></div>
      <div className={slot}><ChartNoAxesCombined className={ic} strokeWidth={1.25} /></div>
      <div className={slot}><Presentation className={ic} strokeWidth={1.25} /></div>
      <div className={slot}>
        <span className="flex h-[16px] w-[18px] items-center justify-center border border-[#8d96a3] text-[8px] leading-none text-[#8d96a3]">ETF</span>
      </div>
      <span className="h-px w-[32px] bg-[#e6e8ec]" />
      <div className="mt-[19px] flex flex-col items-center">
        <span className="flex h-[17px] w-[17px] items-center justify-center rounded-full border border-[#8d96a3]">
          <ArrowLeftRight className="h-[11px] w-[11px] text-[#8d96a3]" strokeWidth={1.5} />
        </span>
        <span className="mt-[5px] text-[12px] leading-[14px] text-[#8d96a3]">下单</span>
      </div>
      <div className="mt-auto flex flex-col items-center pb-[2px]">
        <LayoutPanelTop className="h-[20px] w-[20px] text-[#8d96a3]" strokeWidth={1.25} />
        <Headphones className="mt-[36px] h-[18px] w-[18px] text-[#8d96a3]" strokeWidth={1.25} />
        <span className="mt-[35px] flex h-[24px] w-[24px] items-center justify-center gap-[2px] rounded-full bg-[#15151f] ring-2 ring-[#dfe1ee]">
          <span className="h-[8px] w-[6px] rounded-full bg-white" />
          <span className="h-[8px] w-[6px] rounded-full bg-white" />
        </span>
      </div>
    </div>
  );
}

export default function App() {
  return (
    <div className="flex h-[1336px] w-[2560px] flex-col overflow-hidden bg-white font-[family-name:Roboto,'Noto_Sans_CJK_SC',sans-serif]">
      <TopBar />
      <div className="flex min-h-0 flex-1">
        <LeftNav />
        <div className="flex min-w-0 flex-1 flex-col border-l border-[#f0f1f4]">
          <Tabs />
          <PeriodBar />
          <DrawBar />
          <div className="relative min-h-0 flex-1">
            <Chart />
            {/* legends that float over the plots */}
            <div className="absolute left-[10px] top-[2px] flex items-center whitespace-nowrap text-[12px] leading-[16px] text-[#9aa1ad]">
              <CircleChevronDown className="mr-[5px] h-[16px] w-[16px] text-[#7d8590]" strokeWidth={1} />
              <span>2024-11-04 15:30</span>
              <span className="ml-[7px]">开</span>
              <span className="ml-[2px] text-[#f0505f]">68926.00</span>
              <span className="ml-[7px]">高</span>
              <span className="ml-[2px] text-[#f0505f]">68926.01</span>
              <span className="ml-[7px]">低</span>
              <span className="ml-[2px] text-[#f0505f]">68618.00</span>
              <span className="ml-[7px]">收</span>
              <span className="ml-[2px] text-[#f0505f]">68618.01</span>
              <span className="ml-[7px]">涨幅</span>
              <span className="ml-[2px] text-[#f0505f]">-0.45%(-308.00)</span>
              <span className="ml-[7px]">振幅</span>
              <span className="ml-[2px] text-[#f0505f]">0.45%</span>
            </div>
            <CircleChevronDown className="absolute left-[10px] top-[20px] h-[16px] w-[16px] -rotate-90 text-[#7d8590]" strokeWidth={1} />
            <div className="absolute left-[10px] top-[760px] flex items-center whitespace-nowrap text-[12px] leading-[16px] text-[#9aa1ad]">
              <CircleChevronDown className="mr-[4px] h-[16px] w-[16px] text-[#7d8590]" strokeWidth={1} />
              <Bell className="h-[12px] w-[12px]" strokeWidth={1.25} />
              <span>MACD(12,26,9)</span>
              <span className="ml-[7px] text-[#2fd0aa]">DIF:77.58</span>
              <span className="ml-[8px] text-[#f7a90f]">DEA:88.61</span>
              <span className="ml-[7px] text-[#f0505f]">MACD:-22.05</span>
            </div>
            <div className="absolute left-[1053px] top-[1014px] whitespace-nowrap font-[family-name:'Liberation_Sans','Noto_Sans_CJK_SC',sans-serif] text-[42.5px] leading-[48px] text-[#0000f0] [-webkit-text-stroke:0.4px_#0000f0]">
              DEA线不破零轴
            </div>
          </div>
        </div>
        <RightNav />
      </div>
    </div>
  );
}
